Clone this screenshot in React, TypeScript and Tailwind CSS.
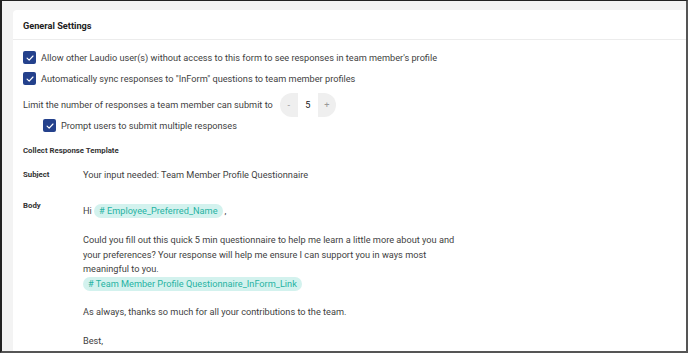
import React from "react";

function Check() {
  return (
    <span className="flex h-[13px] w-[13px] shrink-0 items-center justify-center rounded-[2px] bg-[#24418c]">
      <svg viewBox="0 0 12 12" className="h-[10px] w-[10px]" fill="none">
        <path d="M2.5 6.2 L5 8.6 L9.6 3.6" stroke="#fff" strokeWidth="1.4" strokeLinecap="round" strokeLinejoin="round" />
      </svg>
    </span>
  );
}

export default function App() {
  return (
    <div
      className="h-[353px] w-[688px] overflow-hidden border-t border-l-2 border-r-2 border-b-2 border-t-[#222] border-l-[#222] border-r-[#555] border-b-[#555] bg-[#f3f3f3] text-[#3f3f3f]"
      style={{ fontFamily: "Roboto, 'Liberation Sans', sans-serif" }}
    >
      <div className="ml-[11px] mt-[9px] h-[400px] rounded-tl-[4px] bg-white">
        <div className="flex h-[30px] items-center border-b border-[#ececec] pl-[10px] pt-[2px] text-[9.2px] font-bold text-[#222]">
          General Settings
        </div>
        <div className="pl-[10px] pt-[11px] text-[9.2px] leading-[12px]">
          <div className="flex h-[13px] items-center gap-[5px]">
            <Check />
            <span>Allow other Laudio user(s) without access to this form to see responses in team member's profile</span>
          </div>
          <div className="mt-[8px] flex h-[13px] items-center gap-[5px]">
            <Check />
            <span>Automatically sync responses to "InForm" questions to team member profiles</span>
          </div>
          <div className="mt-[8px] flex h-[24px] items-center">
            <span>Limit the number of responses a team member can submit to</span>
            <div className="ml-[7px] flex h-[24px] w-[56px] items-center overflow-hidden rounded-full bg-[#efefef]">
              <span className="flex w-[18px] justify-center text-[#999]">-</span>
              <span className="flex h-[24px] w-[20px] items-center justify-center bg-white text-[#222]">5</span>
              <span className="flex w-[18px] justify-center text-[#999]">+</span>
            </div>
          </div>
          <div className="mt-[2px] flex h-[13px] items-center gap-[5px] pl-[20px]">
            <Check />
            <span>Prompt users to submit multiple responses</span>
          </div>
          <div className="mt-[13px] text-[7.8px] font-bold text-[#333]">Collect Response Template</div>
          <div className="mt-[12px] flex">
            <span className="w-[60px] text-[7.8px] font-bold text-[#333]">Subject</span>
            <span>Your input needed: Team Member Profile Questionnaire</span>
          </div>
          <div className="mt-[19px] flex">
            <span className="w-[60px] text-[7.8px] font-bold text-[#333]">Body</span>
            <div className="w-[384px] pt-[4px] leading-[14.5px]">
              <div className="h-[14px] leading-[14px]">
                Hi{" "}
                <span className="inline-block h-[14px] rounded-full bg-[#d3f2ee] px-[5px] align-top leading-[14px] text-[#27b3a3]">
                  # Employee_Preferred_Name
                </span>
                <span className="ml-[2px]">,</span>
              </div>
              <div className="mt-[15px]">
                Could you fill out this quick 5 min questionnaire to help me learn a little more about you and your
                preferences? Your response will help me ensure I can support you in ways most meaningful to you.
              </div>
              <div className="flex h-[14.5px] items-center">
                <span className="inline-flex h-[14px] items-center rounded-full bg-[#d3f2ee] px-[5px] text-[#27b3a3]">
                  # Team Member Profile Questionnaire_InForm_Link
                </span>
              </div>
              <div className="mt-[14px]">As always, thanks so much for all your contributions to the team.</div>
              <div className="mt-[14.5px]">Best,</div>
              <div className="mt-[2px] h-[14px] w-[124px] rounded-full bg-[#d3f2ee]" />
            </div>
          </div>
        </div>
      </div>
    </div>
  );
}
